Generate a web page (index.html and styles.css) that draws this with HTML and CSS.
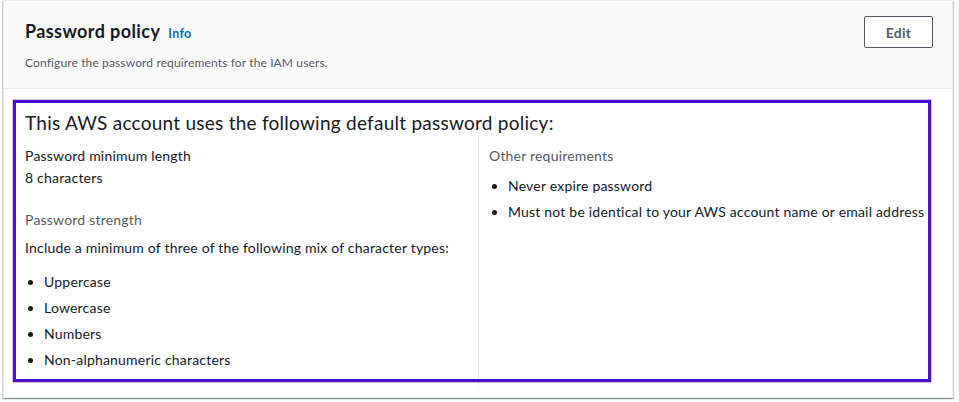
FILE: index.html
```html
<!DOCTYPE html>
<html lang="en">
<head>
<meta charset="utf-8">
<title>Password policy</title>
<link rel="stylesheet" href="styles.css">
</head>
<body>
<div class="card">
  <div class="card-header">
    <div class="header-text">
      <h2 class="title">Password policy <a class="info" href="#">Info</a></h2>
      <p class="desc">Configure the password requirements for the IAM users.</p>
    </div>
    <button class="btn">Edit</button>
  </div>
  <div class="card-body">
    <h3 class="policy-heading">This AWS account uses the following default password policy:</h3>
    <div class="columns">
      <div class="col col-left">
        <div class="label">Password minimum length</div>
        <div class="value">8 characters</div>
        <div class="label muted strength">Password strength</div>
        <div class="value include">Include a minimum of three of the following mix of character types:</div>
        <ul class="list list-left">
          <li>Uppercase</li>
          <li>Lowercase</li>
          <li>Numbers</li>
          <li>Non-alphanumeric characters</li>
        </ul>
      </div>
      <div class="col col-right">
        <div class="label muted">Other requirements</div>
        <ul class="list list-right">
          <li>Never expire password</li>
          <li>Must not be identical to your AWS account name or email address</li>
        </ul>
      </div>
    </div>
    <div class="highlight"></div>
  </div>
</div>
</body>
</html>
```

FILE: styles.css
```css
* { box-sizing: border-box; }
html, body { margin: 0; padding: 0; background: #ffffff; }
body {
  font-family: Lato, "Liberation Sans", Arial, sans-serif;
  color: #16191f;
  width: 959px;
  height: 402px;
  overflow: hidden;
}
.card {
  margin-left: 3px;
  width: 950px;
  border: 1px solid #eaeded;
  background: #fff;
  box-shadow: 0 1px 1px 0 rgba(0,28,36,.3), 1px 1px 1px 0 rgba(0,28,36,.15), -1px 1px 1px 0 rgba(0,28,36,.15);
}
.card-header {
  background: #fafafa;
  border-bottom: 1px solid #eaeded;
  height: 88px;
  padding: 15px 19px 0 21px;
  display: flex;
  justify-content: space-between;
  align-items: flex-start;
}
.title {
  margin: 4px 0 0 0;
  font-size: 18px;
  line-height: 22px;
  font-weight: 700;
  letter-spacing: 0.4px;
  color: #16191f;
  display: flex;
  align-items: baseline;
}
.info {
  margin-left: 8px;
  font-size: 12.5px;
  font-weight: 700;
  letter-spacing: 0.3px;
  color: #0073bb;
  text-decoration: none;
}
.desc {
  margin: 10px 0 0 0;
  font-size: 12px;
  line-height: 16px;
  letter-spacing: 0.13px;
  color: #545b64;
}
.btn {
  width: 69px;
  height: 32px;
  border: 1px solid #545b64;
  border-radius: 2px;
  background: #fff;
  color: #545b64;
  font-family: inherit;
  font-size: 14px;
  font-weight: 700;
  letter-spacing: 0.3px;
  padding: 0;
  cursor: pointer;
}
.card-body {
  position: relative;
  padding: 22px 20px 10px 21px;
}
.policy-heading {
  margin: 0;
  font-size: 19px;
  line-height: 24px;
  font-weight: 400;
  letter-spacing: 0.25px;
  color: #16191f;
}
.columns {
  display: grid;
  grid-template-columns: 453px 1fr;
}
.col { padding-top: 10px; padding-bottom: 16px; }
.col-right {
  border-left: 1px solid #eaeded;
  padding-left: 10px;
}
.label, .value, .list {
  font-size: 14px;
  line-height: 22px;
  letter-spacing: 0.2px;
}
.muted { color: #545b64; }
.strength { margin-top: 20px; }
.include { margin-top: 6px; }
.list {
  margin: 0;
  padding: 0 0 0 19px;
}
.list li { margin-bottom: 4px; }
.list li:last-child { margin-bottom: 0; }
.list-left { margin-top: 12px; }
.list-right { margin-top: 8px; }
.highlight {
  position: absolute;
  left: 9px;
  top: 11px;
  width: 918px;
  height: 282px;
  border: 3px solid #4b0fcb;
  box-shadow: 0 0 0 0.5px rgba(75,15,203,.5);
  pointer-events: none;
}
```
